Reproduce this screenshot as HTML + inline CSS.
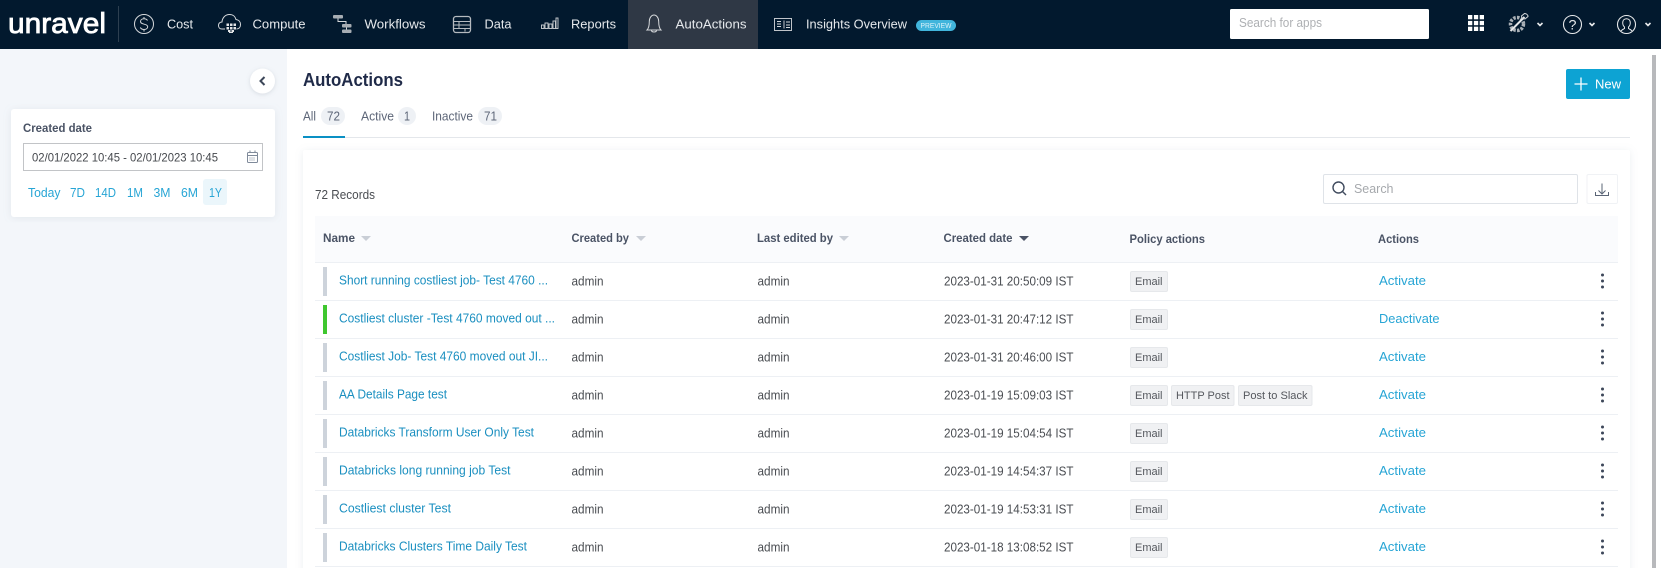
<!DOCTYPE html>
<html lang="en"><head><meta charset="utf-8"><title>AutoActions</title>
<style>
html,body{margin:0;padding:0;background:#fff;width:1661px;height:568px;overflow:hidden}
svg{display:block;font-family:"Liberation Sans",sans-serif}
text{font-size:13px;white-space:pre}
.nav{fill:#e6e9ec}
.l{fill:#1a8fc0}
.a{fill:#4a4d52}
.h{fill:#4a5365;font-weight:bold;font-size:12px}
.t{fill:#55585e;font-size:11px}
.g{fill:#f0f1f3;stroke:#e6e8eb}
.c{fill:#27a5d5}
.i{fill:none;stroke:#d5d8db;stroke-width:1}
.m{fill:#3d4759}
</style></head><body>
<svg width="1661" height="568" viewBox="0 0 1661 568" xmlns="http://www.w3.org/2000/svg">
<defs>
<filter id="s" x="-5%" y="-5%" width="110%" height="110%"><feDropShadow dx="0" dy="1" stdDeviation="4" flood-color="#8a97a8" flood-opacity=".16"/></filter>
<filter id="s2" x="-40%" y="-40%" width="180%" height="180%"><feDropShadow dx="0" dy="1" stdDeviation="2" flood-color="#7c8797" flood-opacity=".25"/></filter>
</defs>
<rect width="1661" height="568" fill="#fff"/>
<!-- sidebar -->
<rect x="0" y="49" width="287" height="519" fill="#f3f6fa"/>
<circle cx="262.5" cy="81" r="12.5" fill="#fff" filter="url(#s2)"/>
<path d="M264.5 77l-4 4 4 4" fill="none" stroke="#3d4759" stroke-width="2"/>
<rect x="11" y="109" width="264" height="108" rx="3" fill="#fff" filter="url(#s)"/>
<text x="23" y="132" font-weight="bold" style="font-size:12px" fill="#4a5365" textLength="69" lengthAdjust="spacingAndGlyphs">Created date</text>
<rect x="23.500" y="143.500" width="239" height="27" fill="#fff" stroke="#c2c4c7"/>
<text x="32" y="161.500" style="font-size:12px" fill="#45484d" textLength="186" lengthAdjust="spacingAndGlyphs">02/01/2022 10:45 - 02/01/2023 10:45</text>
<g fill="none" stroke="#7f8a9a"><rect x="247.500" y="152.500" width="10" height="10" rx="1"/><path d="M247.500 155.500h10M250 150.500v2M255 150.500v2"/><path d="M249.500 158h6M249.500 160h6" stroke-dasharray="1 1"/></g>
<rect x="203" y="179" width="24" height="26" rx="3" fill="#ebf6fb"/>
<g class="c">
<text class="c" x="28" y="197" textLength="32.500" lengthAdjust="spacingAndGlyphs">Today</text>
<text class="c" x="70" y="197" textLength="15" lengthAdjust="spacingAndGlyphs">7D</text>
<text class="c" x="95" y="197" textLength="21" lengthAdjust="spacingAndGlyphs">14D</text>
<text class="c" x="127" y="197" textLength="16" lengthAdjust="spacingAndGlyphs">1M</text>
<text class="c" x="153.500" y="197" textLength="17" lengthAdjust="spacingAndGlyphs">3M</text>
<text class="c" x="181" y="197" textLength="17" lengthAdjust="spacingAndGlyphs">6M</text>
<text class="c" x="209" y="197" textLength="13" lengthAdjust="spacingAndGlyphs">1Y</text>
</g>
<!-- header -->
<rect width="1661" height="49" fill="#02192e"/>
<rect x="628" y="0" width="130" height="49" fill="#2f3845"/>
<text x="8" y="33" fill="#fff" stroke="#fff" stroke-width=".8" style="font-size:29px" textLength="98" lengthAdjust="spacingAndGlyphs">unravel</text>
<rect x="118" y="6" width="1" height="36" fill="#2d3f50"/>
<text class="nav" x="167" y="28.500" textLength="26" lengthAdjust="spacingAndGlyphs">Cost</text>
<text class="nav" x="252.500" y="28.500" textLength="53" lengthAdjust="spacingAndGlyphs">Compute</text>
<text class="nav" x="364.500" y="28.500" textLength="61" lengthAdjust="spacingAndGlyphs">Workflows</text>
<text class="nav" x="484.500" y="28.500" textLength="27" lengthAdjust="spacingAndGlyphs">Data</text>
<text class="nav" x="571" y="28.500" textLength="45" lengthAdjust="spacingAndGlyphs">Reports</text>
<text class="nav" x="675.500" y="28.500" textLength="71" lengthAdjust="spacingAndGlyphs">AutoActions</text>
<text class="nav" x="806" y="28.500" textLength="101" lengthAdjust="spacingAndGlyphs">Insights Overview</text>
<rect x="916" y="20" width="40" height="11" rx="5.500" fill="#41b5dc"/>
<text x="920.500" y="28" fill="#d9f1f9" style="font-size:7px" textLength="31" lengthAdjust="spacingAndGlyphs">PREVIEW</text>
<!-- nav icons -->
<circle class="i" cx="144" cy="24" r="9.500"/>
<path class="i" d="M147.500 20.500c-.7-1.200-2-1.700-3.500-1.700-2 0-3.500 1.100-3.500 2.700 0 3.600 7.200 1.800 7.200 5.300 0 1.600-1.600 2.700-3.700 2.700-1.600 0-3-.7-3.700-2M144 17v2M144 29.500v2"/>
<path class="i" d="M225 29h-3c-2.200 0-3.500-1.500-3.500-3.500s1.300-3.300 3.500-3.500c.3-4 3-7.500 7.500-7.500 3.400 0 5.800 2 6.500 5 2.700.4 4.500 2.300 4.500 5s-1.500 4.500-4 4.500"/>
<g fill="#e2e4e6"><rect x="226.500" y="23.500" width="2.500" height="2.500"/><rect x="230" y="23.500" width="2.500" height="2.500"/><rect x="233.500" y="23.500" width="2.500" height="2.500"/><rect x="226.500" y="27" width="2.500" height="2.500"/><rect x="230" y="27" width="2.500" height="2.500"/><rect x="233.500" y="27" width="2.500" height="2.500"/><rect x="228" y="30" width="2.500" height="2"/><rect x="231.500" y="30" width="2.500" height="2"/><rect x="229" y="32" width="4" height="1"/></g>
<g fill="#a7adb3"><rect x="333" y="15" width="10" height="3.500" rx="1"/><rect x="342" y="24" width="9.500" height="3.500" rx="1"/><rect x="342" y="29.500" width="9.500" height="3.500" rx="1"/></g>
<path d="M338 18.500v3h8v2.500M346.500 27.500v2" fill="none" stroke="#d5d8db"/>
<g fill="none" stroke="#b5babf"><rect x="453.500" y="16.500" width="17" height="16" rx="2.500" stroke-width="1.300"/><path d="M453.500 21.500h17M453.500 25h17M453.500 28.500h17M459 21.500v3M465 28.500v3M459 25v3"/></g>
<g fill="none" stroke="#cfd2d5" stroke-width=".9"><rect x="541.500" y="25" width="2.500" height="3.500"/><rect x="545" y="23" width="3" height="5.500"/><rect x="549" y="24" width="3" height="4.500"/><rect x="553" y="21" width="2.500" height="7.500"/><rect x="556" y="18" width="2" height="10.500"/></g>
<path class="i" d="M647 30c2-2 2.300-5 2.300-8.500 0-3.800 2.300-6.500 4.700-6.500s4.700 2.700 4.700 6.500c0 3.500.3 6.500 2.300 8.500zM651.500 30.500c.3 2 4.700 2 5 0"/>
<g fill="none" stroke="#d5d8db" stroke-width=".9"><rect x="774.500" y="18.500" width="17" height="12"/><path d="M777 21.500h4M777 24h4M777 26.500h4M784 20.500v8M786 22h4M786 25h4M786 27.500h4"/></g>
<!-- search for apps -->
<rect x="1230" y="9" width="199" height="30" rx="1.500" fill="#fff"/>
<text x="1239" y="27" fill="#aeb0b3" style="font-size:13px" textLength="83" lengthAdjust="spacingAndGlyphs">Search for apps</text>
<!-- right icons -->
<g fill="#fff"><rect x="1468" y="15" width="4.300" height="4.300"/><rect x="1473.900" y="15" width="4.300" height="4.300"/><rect x="1479.700" y="15" width="4.300" height="4.300"/><rect x="1468" y="20.900" width="4.300" height="4.300"/><rect x="1473.900" y="20.900" width="4.300" height="4.300"/><rect x="1479.700" y="20.900" width="4.300" height="4.300"/><rect x="1468" y="26.700" width="4.300" height="4.300"/><rect x="1473.900" y="26.700" width="4.300" height="4.300"/><rect x="1479.700" y="26.700" width="4.300" height="4.300"/></g>
<circle cx="1517" cy="24" r="6.500" fill="none" stroke="#aab0b6" stroke-width="3.500" stroke-dasharray="2.500 1.300"/>
<path d="M1510.500 31l14-14" stroke="#e4e6e8" stroke-width="2"/><path d="M1524.500 13.500c2 0 3.500 1.500 3.500 3l-3 2.500-3-.5-.5-2.500z" fill="none" stroke="#d5d8db"/>
<g fill="none" stroke="#e8eaec" stroke-width="1.600"><path d="M1537.500 23l2.500 2.500 2.500-2.500M1589.500 23l2.500 2.500 2.500-2.500M1645.500 23l2.500 2.500 2.500-2.500"/></g>
<circle cx="1572.500" cy="24.500" r="9" fill="none" stroke="#e6e8ea" stroke-width="1.100"/>
<text x="1568.500" y="29.500" fill="#e6e8ea" style="font-size:14px" textLength="8" lengthAdjust="spacingAndGlyphs">?</text>
<circle cx="1626.500" cy="24.500" r="9" fill="none" stroke="#e6e8ea" stroke-width="1.100"/>
<path d="M1621 31c.8-1.300 2.500-1.800 3.500-2.500v-1.500c-1.200-1-1.800-2.500-1.800-4.200 0-2.400 1.500-4 3.800-4s3.800 1.600 3.800 4c0 1.700-.6 3.200-1.800 4.200v1.500c1 .7 2.700 1.200 3.500 2.500" fill="none" stroke="#e6e8ea"/>
<!-- main top -->
<text x="303" y="86" font-weight="bold" style="font-size:18px" fill="#1f2a48" textLength="100" lengthAdjust="spacingAndGlyphs">AutoActions</text>
<rect x="1566" y="69" width="64" height="30" rx="2" fill="#0da3d3"/>
<path d="M1574.500 84h13M1581 77.500v13" stroke="#fff" stroke-width="1.300"/>
<text x="1595" y="88.500" fill="#fff" textLength="26" lengthAdjust="spacingAndGlyphs">New</text>
<rect x="1652" y="55" width="4" height="513" fill="#b8b9bc"/>
<!-- tabs -->
<rect x="321" y="107" width="24" height="18" rx="9" fill="#eef1f5"/>
<rect x="398" y="107" width="18" height="18" rx="9" fill="#eef1f5"/>
<rect x="478" y="107" width="24" height="18" rx="9" fill="#eef1f5"/>
<g fill="#5d6678">
<text x="303" y="120.500" fill="#5d6678" textLength="13" lengthAdjust="spacingAndGlyphs">All</text>
<text x="327" y="120.500" fill="#5d6678" textLength="13" lengthAdjust="spacingAndGlyphs">72</text>
<text x="361" y="120.500" fill="#5d6678" textLength="33" lengthAdjust="spacingAndGlyphs">Active</text>
<text x="404" y="120.500" fill="#5d6678" textLength="6" lengthAdjust="spacingAndGlyphs">1</text>
<text x="432" y="120.500" fill="#5d6678" textLength="41" lengthAdjust="spacingAndGlyphs">Inactive</text>
<text x="484" y="120.500" fill="#5d6678" textLength="13" lengthAdjust="spacingAndGlyphs">71</text>
</g>
<rect x="303" y="137" width="1327" height="1" fill="#e4e7eb"/>
<rect x="303" y="136" width="42" height="2" fill="#0a90c4"/>
<!-- card -->
<rect x="303" y="150" width="1327" height="430" rx="2" fill="#fff" filter="url(#s)"/>
<text x="315" y="199" fill="#4a4d52" textLength="60" lengthAdjust="spacingAndGlyphs">72 Records</text>
<rect x="1323.500" y="174.500" width="254" height="29" rx="1.500" fill="#fff" stroke="#dfe3e8"/>
<circle cx="1338.500" cy="187.500" r="5.500" fill="none" stroke="#414c5f" stroke-width="1.400"/><path d="M1342.500 191.500l3.500 3.500" stroke="#414c5f" stroke-width="1.400"/>
<text x="1354" y="193" fill="#a6a9ad" textLength="39.500" lengthAdjust="spacingAndGlyphs">Search</text>
<rect x="1587" y="174.500" width="30.500" height="29" rx="1.500" fill="#fff" stroke="#f0f2f5"/>
<path d="M1602 183.500v10M1598.500 190.500l3.500 3.500 3.500-3.500M1595.500 192v3.500h13V192" fill="none" stroke="#5a6475"/>
<!-- table head -->
<rect x="315" y="216" width="1303" height="46" fill="#fafbfd"/>
<text class="h" x="323" y="242" textLength="32" lengthAdjust="spacingAndGlyphs">Name</text>
<path d="M361 236h10l-5 5z" fill="#c9ced6"/>
<text class="h" x="571.500" y="242" textLength="57.500" lengthAdjust="spacingAndGlyphs">Created by</text>
<path d="M636 236h10l-5 5z" fill="#c9ced6"/>
<text class="h" x="757" y="242" textLength="76" lengthAdjust="spacingAndGlyphs">Last edited by</text>
<path d="M839 236h10l-5 5z" fill="#c9ced6"/>
<text class="h" x="943.500" y="242" textLength="69" lengthAdjust="spacingAndGlyphs">Created date</text>
<path d="M1019 236h10l-5 5z" fill="#4a5365"/>
<text class="h" x="1129.500" y="243" textLength="75.500" lengthAdjust="spacingAndGlyphs">Policy actions</text>
<text class="h" x="1378" y="243" textLength="41" lengthAdjust="spacingAndGlyphs">Actions</text>
<!-- rows -->
<g fill="#edf0f4"><rect x="315" y="262" width="1303" height="1"/><rect x="315" y="300" width="1303" height="1"/><rect x="315" y="338" width="1303" height="1"/><rect x="315" y="376" width="1303" height="1"/><rect x="315" y="414" width="1303" height="1"/><rect x="315" y="452" width="1303" height="1"/><rect x="315" y="490" width="1303" height="1"/><rect x="315" y="528" width="1303" height="1"/><rect x="315" y="566" width="1303" height="1"/></g>

<g transform="translate(0,0)">
<rect x="323" y="267" width="4" height="29" fill="#cdd3db"/>
<text class="l" x="339" y="284.500" textLength="209" lengthAdjust="spacingAndGlyphs">Short running costliest job- Test 4760 ...</text>
<text class="a" x="571.500" y="285.500" textLength="32" lengthAdjust="spacingAndGlyphs">admin</text><text class="a" x="757.500" y="285.500" textLength="32" lengthAdjust="spacingAndGlyphs">admin</text>
<text class="a" x="944" y="285.500" textLength="129.500" lengthAdjust="spacingAndGlyphs">2023-01-31 20:50:09 IST</text>
<rect class="g" x="1130.500" y="271.500" width="37" height="20" rx="1.500"/><text class="t" x="1135" y="285" textLength="27.500" lengthAdjust="spacingAndGlyphs">Email</text>
<text class="c" x="1379" y="285" textLength="47" lengthAdjust="spacingAndGlyphs">Activate</text>
<circle class="m" cx="1602.500" cy="275" r="1.500"/><circle class="m" cx="1602.500" cy="281" r="1.500"/><circle class="m" cx="1602.500" cy="287" r="1.500"/>
</g>
<g transform="translate(0,38)">
<rect x="323" y="267" width="4" height="29" fill="#3fc72f"/>
<text class="l" x="339" y="284.500" textLength="216" lengthAdjust="spacingAndGlyphs">Costliest cluster -Test 4760 moved out ...</text>
<text class="a" x="571.500" y="285.500" textLength="32" lengthAdjust="spacingAndGlyphs">admin</text><text class="a" x="757.500" y="285.500" textLength="32" lengthAdjust="spacingAndGlyphs">admin</text>
<text class="a" x="944" y="285.500" textLength="129.500" lengthAdjust="spacingAndGlyphs">2023-01-31 20:47:12 IST</text>
<rect class="g" x="1130.500" y="271.500" width="37" height="20" rx="1.500"/><text class="t" x="1135" y="285" textLength="27.500" lengthAdjust="spacingAndGlyphs">Email</text>
<text class="c" x="1379" y="285" textLength="60.500" lengthAdjust="spacingAndGlyphs">Deactivate</text>
<circle class="m" cx="1602.500" cy="275" r="1.500"/><circle class="m" cx="1602.500" cy="281" r="1.500"/><circle class="m" cx="1602.500" cy="287" r="1.500"/>
</g>
<g transform="translate(0,76)">
<rect x="323" y="267" width="4" height="29" fill="#cdd3db"/>
<text class="l" x="339" y="284.500" textLength="209" lengthAdjust="spacingAndGlyphs">Costliest Job- Test 4760 moved out JI...</text>
<text class="a" x="571.500" y="285.500" textLength="32" lengthAdjust="spacingAndGlyphs">admin</text><text class="a" x="757.500" y="285.500" textLength="32" lengthAdjust="spacingAndGlyphs">admin</text>
<text class="a" x="944" y="285.500" textLength="129.500" lengthAdjust="spacingAndGlyphs">2023-01-31 20:46:00 IST</text>
<rect class="g" x="1130.500" y="271.500" width="37" height="20" rx="1.500"/><text class="t" x="1135" y="285" textLength="27.500" lengthAdjust="spacingAndGlyphs">Email</text>
<text class="c" x="1379" y="285" textLength="47" lengthAdjust="spacingAndGlyphs">Activate</text>
<circle class="m" cx="1602.500" cy="275" r="1.500"/><circle class="m" cx="1602.500" cy="281" r="1.500"/><circle class="m" cx="1602.500" cy="287" r="1.500"/>
</g>
<g transform="translate(0,114)">
<rect x="323" y="267" width="4" height="29" fill="#cdd3db"/>
<text class="l" x="339" y="284.500" textLength="108" lengthAdjust="spacingAndGlyphs">AA Details Page test</text>
<text class="a" x="571.500" y="285.500" textLength="32" lengthAdjust="spacingAndGlyphs">admin</text><text class="a" x="757.500" y="285.500" textLength="32" lengthAdjust="spacingAndGlyphs">admin</text>
<text class="a" x="944" y="285.500" textLength="129.500" lengthAdjust="spacingAndGlyphs">2023-01-19 15:09:03 IST</text>
<rect class="g" x="1130.500" y="271.500" width="37" height="20" rx="1.500"/><text class="t" x="1135" y="285" textLength="27.500" lengthAdjust="spacingAndGlyphs">Email</text>
<rect class="g" x="1171.500" y="271.500" width="62.500" height="20" rx="1.500"/><text class="t" x="1176" y="285" textLength="53.500" lengthAdjust="spacingAndGlyphs">HTTP Post</text>
<rect class="g" x="1238.500" y="271.500" width="73.500" height="20" rx="1.500"/><text class="t" x="1243" y="285" textLength="64.500" lengthAdjust="spacingAndGlyphs">Post to Slack</text>
<text class="c" x="1379" y="285" textLength="47" lengthAdjust="spacingAndGlyphs">Activate</text>
<circle class="m" cx="1602.500" cy="275" r="1.500"/><circle class="m" cx="1602.500" cy="281" r="1.500"/><circle class="m" cx="1602.500" cy="287" r="1.500"/>
</g>
<g transform="translate(0,152)">
<rect x="323" y="267" width="4" height="29" fill="#cdd3db"/>
<text class="l" x="339" y="284.500" textLength="195" lengthAdjust="spacingAndGlyphs">Databricks Transform User Only Test</text>
<text class="a" x="571.500" y="285.500" textLength="32" lengthAdjust="spacingAndGlyphs">admin</text><text class="a" x="757.500" y="285.500" textLength="32" lengthAdjust="spacingAndGlyphs">admin</text>
<text class="a" x="944" y="285.500" textLength="129.500" lengthAdjust="spacingAndGlyphs">2023-01-19 15:04:54 IST</text>
<rect class="g" x="1130.500" y="271.500" width="37" height="20" rx="1.500"/><text class="t" x="1135" y="285" textLength="27.500" lengthAdjust="spacingAndGlyphs">Email</text>
<text class="c" x="1379" y="285" textLength="47" lengthAdjust="spacingAndGlyphs">Activate</text>
<circle class="m" cx="1602.500" cy="275" r="1.500"/><circle class="m" cx="1602.500" cy="281" r="1.500"/><circle class="m" cx="1602.500" cy="287" r="1.500"/>
</g>
<g transform="translate(0,190)">
<rect x="323" y="267" width="4" height="29" fill="#cdd3db"/>
<text class="l" x="339" y="284.500" textLength="171.500" lengthAdjust="spacingAndGlyphs">Databricks long running job Test</text>
<text class="a" x="571.500" y="285.500" textLength="32" lengthAdjust="spacingAndGlyphs">admin</text><text class="a" x="757.500" y="285.500" textLength="32" lengthAdjust="spacingAndGlyphs">admin</text>
<text class="a" x="944" y="285.500" textLength="129.500" lengthAdjust="spacingAndGlyphs">2023-01-19 14:54:37 IST</text>
<rect class="g" x="1130.500" y="271.500" width="37" height="20" rx="1.500"/><text class="t" x="1135" y="285" textLength="27.500" lengthAdjust="spacingAndGlyphs">Email</text>
<text class="c" x="1379" y="285" textLength="47" lengthAdjust="spacingAndGlyphs">Activate</text>
<circle class="m" cx="1602.500" cy="275" r="1.500"/><circle class="m" cx="1602.500" cy="281" r="1.500"/><circle class="m" cx="1602.500" cy="287" r="1.500"/>
</g>
<g transform="translate(0,228)">
<rect x="323" y="267" width="4" height="29" fill="#cdd3db"/>
<text class="l" x="339" y="284.500" textLength="112" lengthAdjust="spacingAndGlyphs">Costliest cluster Test</text>
<text class="a" x="571.500" y="285.500" textLength="32" lengthAdjust="spacingAndGlyphs">admin</text><text class="a" x="757.500" y="285.500" textLength="32" lengthAdjust="spacingAndGlyphs">admin</text>
<text class="a" x="944" y="285.500" textLength="129.500" lengthAdjust="spacingAndGlyphs">2023-01-19 14:53:31 IST</text>
<rect class="g" x="1130.500" y="271.500" width="37" height="20" rx="1.500"/><text class="t" x="1135" y="285" textLength="27.500" lengthAdjust="spacingAndGlyphs">Email</text>
<text class="c" x="1379" y="285" textLength="47" lengthAdjust="spacingAndGlyphs">Activate</text>
<circle class="m" cx="1602.500" cy="275" r="1.500"/><circle class="m" cx="1602.500" cy="281" r="1.500"/><circle class="m" cx="1602.500" cy="287" r="1.500"/>
</g>
<g transform="translate(0,266)">
<rect x="323" y="267" width="4" height="29" fill="#cdd3db"/>
<text class="l" x="339" y="284.500" textLength="188" lengthAdjust="spacingAndGlyphs">Databricks Clusters Time Daily Test</text>
<text class="a" x="571.500" y="285.500" textLength="32" lengthAdjust="spacingAndGlyphs">admin</text><text class="a" x="757.500" y="285.500" textLength="32" lengthAdjust="spacingAndGlyphs">admin</text>
<text class="a" x="944" y="285.500" textLength="129.500" lengthAdjust="spacingAndGlyphs">2023-01-18 13:08:52 IST</text>
<rect class="g" x="1130.500" y="271.500" width="37" height="20" rx="1.500"/><text class="t" x="1135" y="285" textLength="27.500" lengthAdjust="spacingAndGlyphs">Email</text>
<text class="c" x="1379" y="285" textLength="47" lengthAdjust="spacingAndGlyphs">Activate</text>
<circle class="m" cx="1602.500" cy="275" r="1.500"/><circle class="m" cx="1602.500" cy="281" r="1.500"/><circle class="m" cx="1602.500" cy="287" r="1.500"/>
</g>
</svg>
</body></html>
